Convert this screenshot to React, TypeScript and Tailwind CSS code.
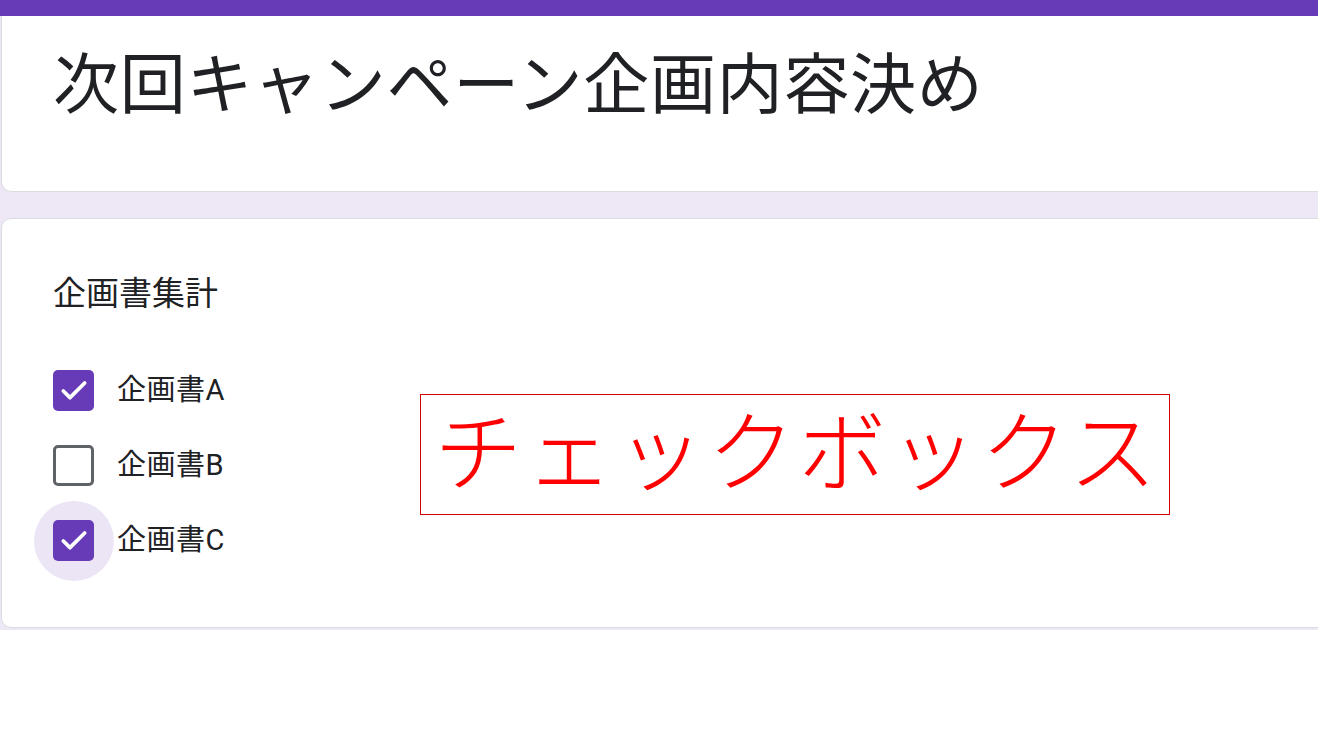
import { Check } from 'lucide-react';

const jp = "font-['Roboto','Noto_Sans_CJK_JP',sans-serif]";

const options = [
    { label: '企画書A', checked: true, focus: false },
    { label: '企画書B', checked: false, focus: false },
    { label: '企画書C', checked: true, focus: true },
];

function Box({ checked, focus }: { checked: boolean; focus: boolean }) {
    return (
        <div className="relative flex h-[41px] w-[41px] shrink-0 items-center justify-center">
            {/* ripple */}
            {focus && <div className="absolute left-1/2 top-1/2 h-[80px] w-[80px] -translate-x-1/2 -translate-y-1/2 rounded-full bg-[#ebe5f5]" />}
            {checked ? (
                <div className="relative flex h-[41px] w-[41px] items-center justify-center rounded-[5px] bg-[#673ab7]">
                    <Check size={32} strokeWidth={2.8} className="text-white" />
                </div>
            ) : (
                <div className="relative h-[41px] w-[41px] rounded-[5px] border-[3.5px] border-[#5f6368]" />
            )}
        </div>
    );
}

export default function App() {
    return (
        <div className={`relative h-[741px] w-[1318px] overflow-hidden bg-white text-[#202124] ${jp}`}>
            <div className="h-[16px] bg-[#673ab7]" />

            <div className="flex flex-col gap-[26px] bg-[#ede7f6] pb-[2px] pl-px">
                {/* タイトル */}
                <div className="-mr-4 h-[176px] rounded-b-[10px] border border-t-0 border-[#dadce0] bg-white pl-[51px] pt-[37px]">
                    <h1 className="text-[66px] leading-[66px] font-normal tracking-[0.7px]">次回キャンペーン企画内容決め</h1>
                </div>

                {/* 質問 */}
                <div className="-mr-4 h-[410px] rounded-[10px] border border-[#dadce0] bg-white pl-[51px] pt-[58px]">
                    <p className="text-[33px] leading-[33px]">企画書集計</p>
                    <div className="mt-[60px] flex flex-col gap-[34px]">
                        {options.map((o) => (
                            <div key={o.label} className="flex items-center gap-[23px]">
                                <Box checked={o.checked} focus={o.focus} />
                                <span className="text-[29px] leading-[29px] tracking-[0.5px]">{o.label}</span>
                            </div>
                        ))}
                    </div>
                </div>
            </div>

            {/* 注釈ラベル */}
            <div className="absolute left-[420px] top-[394px] flex h-[121px] w-[750px] items-center justify-center border border-[#d00000] bg-white pb-[17px] pl-[4px]">
                <span className="text-[88px] leading-none font-light tracking-[3px] text-[#ff0000] font-['Noto_Sans_CJK_JP',sans-serif]">チェックボックス</span>
            </div>
        </div>
    );
}
